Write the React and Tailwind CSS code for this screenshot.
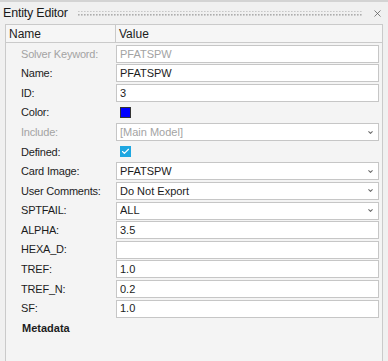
import { Check, ChevronDown, X } from "lucide-react";

const rows = [
  { label: "Solver Keyword:", value: "PFATSPW", kind: "text", muted: true },
  { label: "Name:", value: "PFATSPW", kind: "text" },
  { label: "ID:", value: "3", kind: "text" },
  { label: "Color:", kind: "color" },
  { label: "Include:", value: "[Main Model]", kind: "select", muted: true },
  { label: "Defined:", kind: "check" },
  { label: "Card Image:", value: "PFATSPW", kind: "select" },
  { label: "User Comments:", value: "Do Not Export", kind: "select" },
  { label: "SPTFAIL:", value: "ALL", kind: "select" },
  { label: "ALPHA:", value: "3.5", kind: "text" },
  { label: "HEXA_D:", value: "", kind: "text" },
  { label: "TREF:", value: "1.0", kind: "text" },
  { label: "TREF_N:", value: "0.2", kind: "text" },
  { label: "SF:", value: "1.0", kind: "text" },
];

// drag handle: two rows of small dots
const Grip = () => (
  <svg className="h-[7px] flex-1">
    <defs>
      <pattern id="dots" width="3" height="4" patternUnits="userSpaceOnUse">
        <rect x="0" y="0" width="1.6" height="1.6" fill="#adadad" />
      </pattern>
    </defs>
    <rect x="0" y="1" width="100%" height="6" fill="url(#dots)" />
  </svg>
);

const Value = ({ row }) => {
  if (row.kind === "color") {
    return (
      <div className="flex h-full items-center pl-[4px]">
        <div className="h-[11px] w-[11px] border border-[#333] bg-[#0000ff]" />
      </div>
    );
  }

  if (row.kind === "check") {
    return (
      <div className="flex h-full items-center pl-[4px]">
        <div className="flex h-[11px] w-[11px] items-center justify-center bg-[#1ea7e1]">
          <Check size={9} strokeWidth={3} className="text-white" />
        </div>
      </div>
    );
  }

  return (
    <div className="mr-[3px] flex h-[18px] items-center border border-[#c6c6c6] bg-white pl-[3px] pr-[4px]">
      <span
        className={`flex-1 truncate ${row.muted ? "text-[#a3a3a3]" : "text-[#1c1c1c]"}`}
      >
        {row.value}
      </span>

      {row.kind === "select" && (
        <ChevronDown size={7} strokeWidth={3.5} className="text-[#6a6a6a]" />
      )}
    </div>
  );
};

const App = () => {
  return (
    <div className="flex h-[361px] w-[388px] flex-col overflow-hidden border-t-2 border-[#d3d3d3] bg-[#f0f0f0] font-['Liberation_Sans',Arial,sans-serif] text-[11px] text-[#1c1c1c]">
      {/* Title bar */}

      <div className="flex h-[22px] shrink-0 items-center gap-[10px] pl-[3px] pr-[5px]">
        <span className="text-[12.5px] tracking-[-0.2px] text-[#1a1a1a]">
          Entity Editor
        </span>

        <Grip />

        <X size={11} strokeWidth={1.6} className="text-[#555]" />
      </div>

      {/* Table */}

      <div className="ml-[5px] flex w-[378px] flex-1 flex-col border-x border-[#cacaca] bg-[#f4f4f4]">
        <div className="grid h-[19px] shrink-0 grid-cols-[110px_1fr] border-y border-[#cacaca] bg-[#f6f6f6] text-[12px]">
          <div className="flex items-center border-r border-[#cacaca] pl-[3px]">
            Name
          </div>

          <div className="flex items-center pl-[3px]">Value</div>
        </div>

        <div className="pt-[1px]">
          {rows.map((row) => (
            <div
              key={row.label}
              className="grid h-[19.6px] grid-cols-[110px_1fr] items-center"
            >
              <span
                className={`pl-[15px] tracking-[-0.2px] ${row.muted ? "text-[#a3a3a3]" : ""}`}
              >
                {row.label}
              </span>

              <div className="h-[18px]">
                <Value row={row} />
              </div>
            </div>
          ))}

          <div className="flex h-[20px] items-center pl-[16px] font-bold">
            Metadata
          </div>
        </div>
      </div>
    </div>
  );
};

export default App;
